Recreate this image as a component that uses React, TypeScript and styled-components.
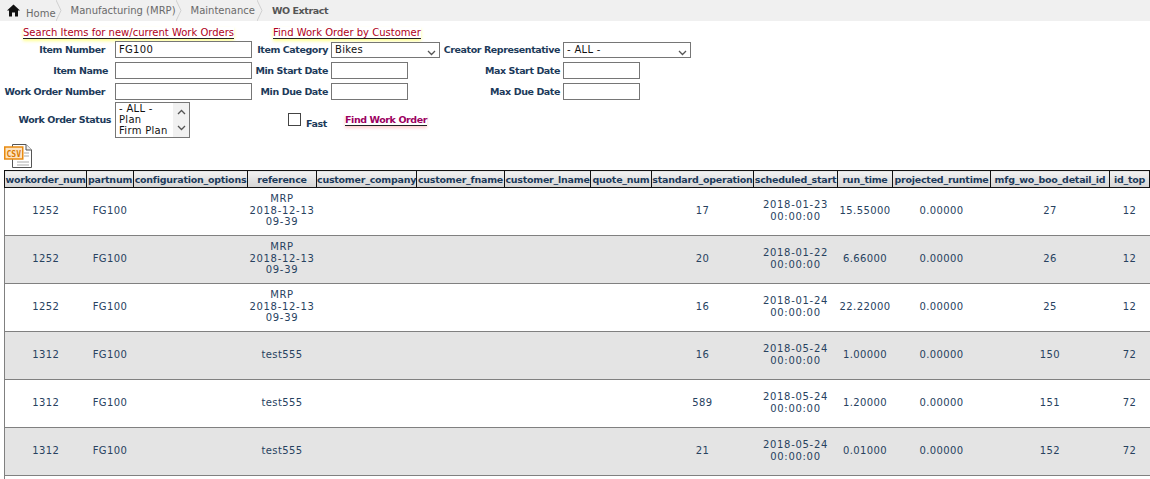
import React from 'react';
import styled, { createGlobalStyle, css } from 'styled-components';

const GlobalStyle = createGlobalStyle`
  html, body { margin: 0; padding: 0; background: #fff; overflow: hidden; }
  body { font-family: "DejaVu Sans", Verdana, sans-serif; font-size: 10px; color: #1c3a5a; }
`;

const boldText = css`
  font-size: 9.5px;
  font-weight: bold;
  letter-spacing: -0.42px;
`;

const Page = styled.div`
  width: 1150px;
  height: 479px;
  overflow: hidden;
`;

// ---------------- breadcrumb ---------------

const Breadcrumb = styled.nav`
  display: flex;
  align-items: center;
  height: 21px;
  background: #f0f0f0;
  padding-left: 7px;
  font-size: 10px;
`;

const Crumb = styled.span<{ $pad: number; $drop?: number }>`
  padding-right: ${(p) => p.$pad}px;
  padding-top: ${(p) => p.$drop ?? 0}px;
  color: #6a6a6a;
`;

const CurrentCrumb = styled.span`
  ${boldText}
  color: #555;
`;

const HomeIcon = styled.svg`
  width: 13px;
  height: 13px;
  margin-right: 6px;
`;

const Chevron = styled.svg`
  width: 6px;
  height: 21px;
  margin-right: 9px;
`;

// ---------------- search form ---------------

const Links = styled.div`
  display: flex;
  box-sizing: border-box;
  height: 18px;
  padding: 6px 0 0 23px;
`;

const TopLink = styled.a<{ $width: number }>`
  width: ${(p) => p.$width}px;
  font-size: 10px;
  line-height: 12px;
  color: #b00020;
  white-space: nowrap;
  span {
    border-bottom: 1px solid #222;
    box-shadow: 0 2px 3px #ffff90;
  }
`;

const FormGrid = styled.div`
  display: grid;
  grid-template-columns: 115px 137px 79px 109px 123px 128px;
  grid-template-rows: 21px 21px 20px 37px;
  align-items: center;
`;

const Label = styled.label<{ $right?: number }>`
  ${boldText}
  color: #1c3a5a;
  text-align: right;
  white-space: nowrap;
  padding-right: ${(p) => p.$right ?? 3}px;
`;

const TextInput = styled.input<{ $width: number }>`
  box-sizing: border-box;
  width: ${(p) => p.$width}px;
  height: 17px;
  border: 1px solid #767676;
  padding: 0 3px;
  font: 10px "DejaVu Sans", sans-serif;
  color: #111;
  letter-spacing: 0.3px;
  outline: none;
`;

const SelectBox = styled.div<{ $width: number }>`
  box-sizing: border-box;
  position: relative;
  width: ${(p) => p.$width}px;
  height: 16px;
  line-height: 14px;
  border: 1px solid #767676;
  padding-left: 3px;
  color: #111;
  font-size: 10px;
  letter-spacing: 0.3px;
  svg {
    position: absolute;
    right: 3px;
    top: 7px;
  }
`;

const ListBox = styled.div`
  box-sizing: border-box;
  position: relative;
  align-self: end;
  width: 75px;
  height: 36px;
  border: 1px solid #767676;
  padding-left: 3px;
  color: #111;
  font-size: 10px;
  letter-spacing: 0.3px;
  line-height: 11px;
`;

const ScrollTrack = styled.div`
  position: absolute;
  top: 0;
  right: 0;
  bottom: 0;
  width: 16px;
  background: #f1f1f1;
  display: flex;
  flex-direction: column;
  align-items: center;
  justify-content: space-between;
  padding: 6px 0;
  box-sizing: border-box;
`;

const FastCell = styled.div`
  display: flex;
  align-items: center;
  grid-column: 3 / span 2;
  padding-left: 36px;
`;

const CheckBox = styled.span`
  box-sizing: border-box;
  width: 13px;
  height: 13px;
  border: 1px solid #444;
  background: #fff;
  margin-right: 5px;
`;

const FastLabel = styled.span`
  ${boldText}
  margin-top: 8px;
  width: 39px;
`;

const FindLink = styled.a`
  ${boldText}
  color: #9c0060;
  white-space: nowrap;
  span {
    border-bottom: 1px solid #222;
    box-shadow: 0 2px 3px #ffd0d0;
  }
`;

const CsvWrap = styled.div`
  box-sizing: border-box;
  height: 32px;
  padding: 6px 0 0 4px;
`;

// ---------------- data table ---------------

const TableWrap = styled.div`
  padding-left: 4px;
`;

const DataTable = styled.table`
  border-collapse: collapse;
  table-layout: fixed;
  width: 1160px;
  font-size: 10px;
`;

const HeadCell = styled.th`
  box-sizing: border-box;
  height: 17px;
  padding: 0;
  border: 1px solid #111;
  background: linear-gradient(#f2f2f2, #d4d4d4);
  color: #1c3a5a;
  font-size: 9.5px;
  font-weight: bold;
  letter-spacing: -0.25px;
  text-align: center;
  white-space: nowrap;
  overflow: hidden;
`;

const Row = styled.tr<{ $alt: boolean }>`
  height: 48px;
  background: ${(p) => (p.$alt ? '#e4e4e4' : '#fff')};
  border-bottom: 1px solid #808080;
`;

const Cell = styled.td<{ $date?: boolean }>`
  padding: 0 0 2px;
  text-align: center;
  line-height: 11.5px;
  letter-spacing: ${(p) => (p.$date ? '0.7px' : '0.4px')};
  color: #27425f;
  &:first-child {
    border-left: 1px solid #808080;
  }
`;

const columns: [string, number][] = [
  ['workorder_num', 82],
  ['partnum', 47],
  ['configuration_options', 114],
  ['reference', 69],
  ['customer_company', 100],
  ['customer_fname', 88],
  ['customer_lname', 86],
  ['quote_num', 61],
  ['standard_operation', 102],
  ['scheduled_start', 84],
  ['run_time', 55],
  ['projected_runtime', 98],
  ['mfg_wo_boo_detail_id', 119],
  ['id_top', 40],
  ['s', 15],
];

const mrp = ['MRP', '2018-12-13', '09-39'];

const rows = [
  { wo: '1252', ref: mrp, op: '17', start: '2018-01-23', run: '15.55000', det: '27', top: '12' },
  { wo: '1252', ref: mrp, op: '20', start: '2018-01-22', run: '6.66000', det: '26', top: '12' },
  { wo: '1252', ref: mrp, op: '16', start: '2018-01-24', run: '22.22000', det: '25', top: '12' },
  { wo: '1312', ref: ['test555'], op: '16', start: '2018-05-24', run: '1.00000', det: '150', top: '72' },
  { wo: '1312', ref: ['test555'], op: '589', start: '2018-05-24', run: '1.20000', det: '151', top: '72' },
  { wo: '1312', ref: ['test555'], op: '21', start: '2018-05-24', run: '0.01000', det: '152', top: '72' },
  { wo: '', ref: [''], op: '', start: '', run: '', det: '', top: '' },
];

const Sep = () => (
  <Chevron viewBox="0 0 6 21">
    <path d="M0 0 L5 10.5 L0 21" fill="none" stroke="#d0d0d0" />
  </Chevron>
);

const Caret = ({ up }: { up?: boolean }) => (
  <svg width="9" height="6" viewBox="0 0 9 6">
    <path d={up ? 'M1 5 L4.5 1.5 L8 5' : 'M1 1 L4.5 4.5 L8 1'} fill="none" stroke="#555" strokeWidth="1.3" />
  </svg>
);

export default function App() {
  return (
    <Page>
      <GlobalStyle />
      <Breadcrumb>
        <HomeIcon viewBox="0 0 13 13">
          <path d="M6.5 0.5 L13 6.5 L11 6.5 L11 12.5 L8 12.5 L8 8.5 L5 8.5 L5 12.5 L2 12.5 L2 6.5 L0 6.5 Z" fill="#111" />
        </HomeIcon>
        <Crumb $pad={0} $drop={5}>Home</Crumb>
        <Sep />
        <Crumb $pad={0}>Manufacturing (MRP)</Crumb>
        <Sep />
        <Crumb $pad={2}>Maintenance</Crumb>
        <Sep />
        <CurrentCrumb>WO Extract</CurrentCrumb>
      </Breadcrumb>
      <Links>
        <TopLink $width={250}><span>Search Items for new/current Work Orders</span></TopLink>
        <TopLink $width={200}><span>Find Work Order by Customer</span></TopLink>
      </Links>
      <FormGrid>
        <Label $right={10}>Item Number</Label>
        <TextInput $width={137} defaultValue="FG100" />
        <Label>Item Category</Label>
        <SelectBox $width={109}>Bikes<Caret /></SelectBox>
        <Label>Creator Representative</Label>
        <SelectBox $width={128}>- ALL -<Caret /></SelectBox>

        <Label $right={7}>Item Name</Label>
        <TextInput $width={137} />
        <Label>Min Start Date</Label>
        <TextInput $width={77} />
        <Label>Max Start Date</Label>
        <TextInput $width={77} />

        <Label $right={10}>Work Order Number</Label>
        <TextInput $width={137} />
        <Label>Min Due Date</Label>
        <TextInput $width={77} />
        <Label>Max Due Date</Label>
        <TextInput $width={77} />

        <Label $right={4}>Work Order Status</Label>
        <ListBox>
          - ALL -<br />Plan<br />Firm Plan
          <ScrollTrack>
            <Caret up />
            <Caret />
          </ScrollTrack>
        </ListBox>
        <FastCell>
          <CheckBox />
          <FastLabel>Fast</FastLabel>
          <FindLink><span>Find Work Order</span></FindLink>
        </FastCell>
      </FormGrid>
      <CsvWrap>
        <svg width="30" height="25" viewBox="0 0 30 25">
          <path d="M8.5 0.5 H22 L27.5 6 V23.5 H8.5 Z" fill="#fff" stroke="#555" />
          <path d="M22 0.5 V6 H27.5" fill="#eee" stroke="#555" />
          <path d="M20 9 H25 M20 12 H25 M13 18 H25 M13 21 H25" stroke="#aaa" />
          <rect x="0.75" y="3" width="18" height="12" fill="#fde3c0" stroke="#e88a10" strokeWidth="1.5" />
          <text x="9.75" y="12.5" fontSize="8" fontWeight="bold" fill="#d97a00" textAnchor="middle" fontFamily="DejaVu Sans Mono, monospace">CSV</text>
        </svg>
      </CsvWrap>
      <TableWrap>
        <DataTable>
          <colgroup>
            {columns.map(([name, w]) => <col key={name} style={{ width: w }} />)}
          </colgroup>
          <thead>
            <tr>
              {columns.map(([name]) => <HeadCell key={name}>{name}</HeadCell>)}
            </tr>
          </thead>
          <tbody>
            {rows.map((r, i) => (
              <Row key={i} $alt={i % 2 === 1}>
                <Cell>{r.wo}</Cell>
                <Cell>{r.wo && 'FG100'}</Cell>
                <Cell />
                <Cell $date={r.ref.length > 1}>{r.ref.map((t, j) => <div key={j}>{t}</div>)}</Cell>
                <Cell />
                <Cell />
                <Cell />
                <Cell />
                <Cell>{r.op}</Cell>
                <Cell $date>{r.start && <><div>{r.start}</div><div>00:00:00</div></>}</Cell>
                <Cell>{r.run}</Cell>
                <Cell>{r.wo && '0.00000'}</Cell>
                <Cell>{r.det}</Cell>
                <Cell>{r.top}</Cell>
                <Cell />
              </Row>
            ))}
          </tbody>
        </DataTable>
      </TableWrap>
    </Page>
  );
}
